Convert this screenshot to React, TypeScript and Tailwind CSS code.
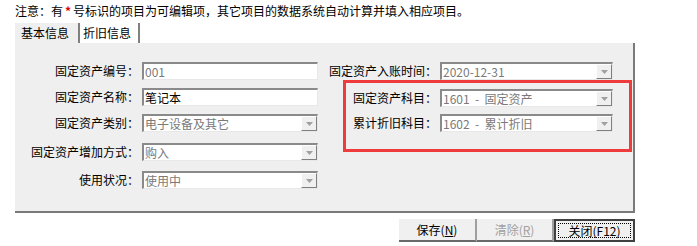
import React from "react";

const FONT = { fontFamily: '"Noto Sans CJK SC", "Noto Sans", sans-serif' };

function Arrow() {
  return (
    <div className="w-[16px] h-full bg-[#f0f0f0] border-t border-l border-t-white border-l-white border-r border-b border-r-[#808080] border-b-[#808080] flex items-center justify-center shrink-0">
      <svg width="7" height="4" viewBox="0 0 7 4">
        <polygon points="0,0 7,0 3.5,4" fill="#a0a0a0" />
      </svg>
    </div>
  );
}

function Field({
  text,
  w,
  combo,
  dark,
}: {
  text: string;
  w: string;
  combo?: boolean;
  dark?: boolean;
}) {
  return (
    <div
      className={`${w} h-[18px] bg-white border-t-2 border-l-2 border-t-[#8a8a8a] border-l-[#8a8a8a] border-b border-r border-b-[#e8e8e8] border-r-[#e8e8e8] flex items-stretch shrink-0`}
    >
      <div
        className={`flex-1 pl-[1px] text-[12px] leading-[15px] whitespace-pre overflow-hidden ${
          dark ? "text-black" : "text-[#7a7a7a]"
        }`}
      >
        {text}
      </div>
      {combo && <Arrow />}
    </div>
  );
}

function Row({
  label,
  lw,
  text,
  fw,
  combo,
  dark,
  cls,
}: {
  label: string;
  lw: string;
  text: string;
  fw: string;
  combo?: boolean;
  dark?: boolean;
  cls?: string;
}) {
  return (
    <div className={`flex items-center h-[18px] ${cls ?? ""}`}>
      <div className={`${lw} text-right text-[12px] leading-[18px] whitespace-nowrap text-black pr-[3px]`}>
        {label}
      </div>
      <Field text={text} w={fw} combo={combo} dark={dark} />
    </div>
  );
}

export default function App() {
  return (
    <div className="w-[697px] h-[246px] bg-white text-black overflow-hidden" style={FONT}>
      <div className="pl-[15px] pt-[3px] h-[23px] text-[12px] leading-[16px] whitespace-nowrap">
        注意：有<span className="text-[#e00000] font-bold mx-[2px]">*</span>号标识的项目为可编辑项，其它项目的数据系统自动计算并填入相应项目。
      </div>
      <div className="ml-[15px] flex h-[20px] text-[12px] leading-[20px]">
        <div className="w-[65px] bg-[#efefef] pl-[6px] border-r-2 border-r-[#808080]">基本信息</div>
        <div className="w-[60px] pl-[3px] border-r-2 border-r-[#808080]">折旧信息</div>
      </div>
      <div className="ml-[15px] w-[620px] h-[170px] bg-[#efefef] border-r-2 border-b-2 border-r-[#7a7a7a] border-b-[#7a7a7a] flex">
        <div className="w-[303px] pt-[19px] flex flex-col">
          <Row label="固定资产编号：" lw="w-[127px]" text="001" fw="w-[176px]" />
          <Row label="固定资产名称：" lw="w-[127px]" text="笔记本" fw="w-[176px]" dark cls="mt-[8px]" />
          <Row label="固定资产类别：" lw="w-[127px]" text="电子设备及其它" fw="w-[176px]" combo cls="mt-[8px]" />
          <Row label="固定资产增加方式：" lw="w-[127px]" text="购入" fw="w-[176px]" combo cls="mt-[11px]" />
          <Row label="使用状况：" lw="w-[127px]" text="使用中" fw="w-[176px]" combo cls="mt-[10px]" />
        </div>
        <div className="ml-[11px] pt-[19px] flex flex-col">
          <Row label="固定资产入账时间：" lw="w-[111px]" text="2020-12-31" fw="w-[173px]" combo />
          <div className="ml-[14px] w-[289px] h-[72px] border-[3px] border-[#ef3b3b] pt-[6px] flex flex-col">
            <Row label="固定资产科目：" lw="w-[94px]" text="1601  -  固定资产" fw="w-[173px]" combo />
            <Row label="累计折旧科目：" lw="w-[94px]" text="1602  -  累计折旧" fw="w-[173px]" combo cls="mt-[7px]" />
          </div>
        </div>
      </div>
      <div className="w-[635px] flex justify-end mt-[6px] text-[12px]">
        <div className="w-[78px] h-[23px] bg-[#f0f0f0] border-b-2 border-r-2 border-b-[#6a6a6a] border-r-[#a0a0a0] flex items-center justify-center">
          保存(<span className="underline">N</span>)
        </div>
        <div className="w-[77px] h-[23px] bg-[#f0f0f0] border-b-2 border-r-2 border-b-[#6a6a6a] border-r-[#a0a0a0] flex items-center justify-center text-[#a0a0a0]">
          清除(<span className="underline">R</span>)
        </div>
        <div className="w-[81px] h-[23px] bg-[#f0f0f0] border-2 border-[#404040] flex items-center justify-center p-[2px]">
          <div className="w-full h-full border border-dotted border-black flex items-center justify-center leading-none">
            关闭(F12)
          </div>
        </div>
      </div>
    </div>
  );
}
